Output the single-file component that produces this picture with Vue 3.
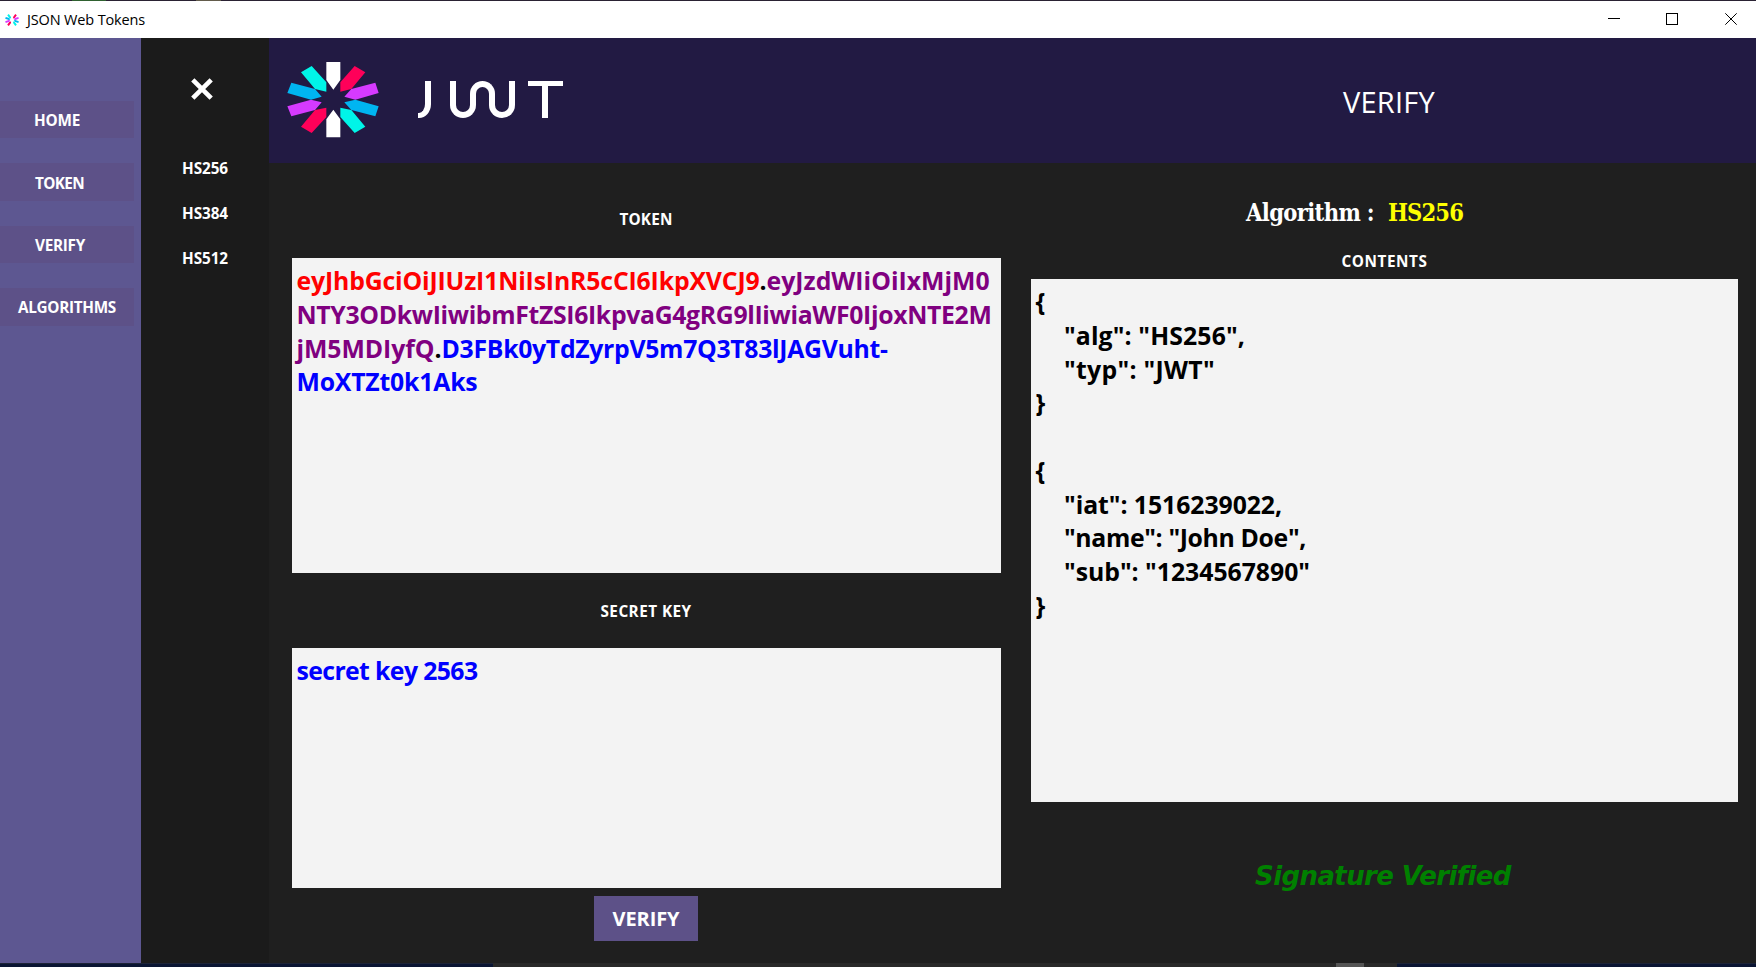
<script setup>
const nav = [
  { label: 'HOME', width: 46, inset: 34 },
  { label: 'TOKEN', width: 49, inset: 35 },
  { label: 'VERIFY', width: 50, inset: 35 },
  { label: 'ALGORITHMS', width: 98, inset: 18 },
]
const algorithms = ['HS256', 'HS384', 'HS512']
const tokenLines = [
  [
    { text: 'eyJhbGciOiJIUzI1NiIsInR5cCI6IkpXVCJ9', kind: 'head', width: 463 },
    { text: '.', kind: 'dot', width: 7 },
    { text: 'eyJzdWIiOiIxMjM0', kind: 'body', width: 223 },
  ],
  [{ text: 'NTY3ODkwIiwibmFtZSI6IkpvaG4gRG9lIiwiaWF0IjoxNTE2M', kind: 'body', width: 695 }],
  [
    { text: 'jM5MDIyfQ', kind: 'body', width: 138 },
    { text: '.', kind: 'dot', width: 7 },
    { text: 'D3FBk0yTdZyrpV5m7Q3T83lJAGVuht-', kind: 'sign', width: 446 },
  ],
  [{ text: 'MoXTZt0k1Aks', kind: 'sign', width: 181 }],
]
const contents = [
  { text: '{', width: 9 },
  { text: '"alg": "HS256",', width: 181, indent: true },
  { text: '"typ": "JWT"', width: 151, indent: true },
  { text: '}', width: 9 },
  { text: '', width: 0 },
  { text: '{', width: 9 },
  { text: '"iat": 1516239022,', width: 218, indent: true },
  { text: '"name": "John Doe",', width: 242, indent: true },
  { text: '"sub": "1234567890"', width: 246, indent: true },
  { text: '}', width: 9 },
]

// Spreads the letters of a single-line text evenly over the given width.
const vFit = {
  mounted(el, { value }) {
    const count = el.textContent.length
    if (count < 2) return
    const natural = el.getBoundingClientRect().width
    el.style.letterSpacing = `${(value - natural) / count}px`
  },
}
</script>

<template>
  <div class="screen">
    <div class="desk-top"><i class="green"></i><i class="olive"></i></div>
    <header class="titlebar">
      <svg class="app-icon" viewBox="50 60 282 238" preserveAspectRatio="none">
        <use href="#burst" />
      </svg>
      <span v-fit="118" class="app-name">JSON Web Tokens</span>
      <svg class="controls" width="130" height="12" viewBox="0 0 130 12" shape-rendering="crispEdges">
        <path d="M0 5.5h12" />
        <path d="M58.5 .5h11v11h-11z" />
        <path d="M117.3 .3l11.4 11.4M128.7 .3l-11.4 11.4" shape-rendering="auto" />
      </svg>
    </header>

    <div class="window">
      <nav class="sidebar">
        <button v-for="n in nav" :key="n.label" :style="{ paddingLeft: n.inset + 'px' }">
          <span v-fit="n.width">{{ n.label }}</span>
        </button>
      </nav>

      <aside class="drawer">
        <svg class="close" width="22" height="22" viewBox="0 0 22 22">
          <path d="M1.8 1.8l18.4 18.4M20.2 1.8L1.8 20.2" />
        </svg>
        <div v-for="a in algorithms" :key="a" class="alg"><span v-fit="46">{{ a }}</span></div>
      </aside>

      <div class="page">
        <div class="banner">
          <svg class="logo" width="94" height="79.33" viewBox="50 60 282 238">
            <g id="burst">
              <path fill="#fff" d="M171 66h42v54l-21 29-21-29zM171 292h42v-54l-21-29-21 29z" />
              <path fill="#ff0059" d="M256 78l32 19-42 50-33 8v-28zM127 279l-32-19 42-50 34-7v28z" />
              <path fill="#00f5e8" d="M127 78L95 97l42 50 34 8v-28zM256 279l32-19-42-50-33-7v28z" />
              <path fill="#d63aff" d="M318 128l10 31-70 20-33-9 21-23zM66 229l-12-30 71-20 32 8-20 23z" />
              <path fill="#00b5f1" d="M66 128l-12 31 71 20 32-9-20-23zM318 229l10-30-70-20-33 8 21 23z" />
            </g>
          </svg>
          <div class="wordmark" role="img" aria-label="JWT">
            <i class="j"></i>
            <i class="w-left"></i><i class="w-cup1"></i><i class="w-arch"></i><i class="w-cup2"></i><i class="w-right"></i>
            <i class="t-bar"></i><i class="t-stem"></i>
          </div>
          <h1><span v-fit="92">VERIFY</span></h1>
        </div>

        <main class="content">
          <section class="left">
            <h2 class="token-label"><span v-fit="53">TOKEN</span></h2>
            <div class="box token-box">
              <div v-for="(line, i) in tokenLines" :key="i" class="line">
                <span v-for="(p, j) in line" :key="j" v-fit="p.width" :class="p.kind">{{ p.text }}</span>
              </div>
            </div>
            <h2 class="key-label"><span v-fit="91">SECRET KEY</span></h2>
            <div class="box key-box">
              <div class="line"><span v-fit="181" class="sign">secret key 2563</span></div>
            </div>
            <button class="verify"><span v-fit="67">VERIFY</span></button>
          </section>

          <section class="right">
            <div class="algorithm">
              <span v-fit="128">Algorithm :</span><span v-fit="75" class="value">HS256</span>
            </div>
            <h2 class="contents-label"><span v-fit="86">CONTENTS</span></h2>
            <div class="box contents-box">
              <div v-for="(c, i) in contents" :key="i" class="line" :class="{ indent: c.indent }">
                <span v-fit="c.width">{{ c.text }}</span>
              </div>
            </div>
            <div class="status"><span v-fit="256">Signature Verified</span></div>
          </section>
        </main>
      </div>
    </div>
    <div class="desk-bottom"><i class="blue"></i><i class="bar"></i><i class="thumb"></i><i class="bar2"></i><i class="blue2"></i></div>
  </div>
</template>

<style>
body {
  margin: 0;
  overflow: hidden;
}
</style>

<style scoped>
.screen {
  width: 1756px;
  height: 967px;
  display: grid;
  grid-template-rows: 1px 37px 925px 4px;
  font-family: 'Open Sans', 'Noto Sans', sans-serif;
  background: #1f1f1f;
}
span {
  display: inline-block;
  white-space: pre;
}
h1,
h2 {
  margin: 0;
}
button {
  border: 0;
  font-family: inherit;
  color: #fff;
  box-sizing: border-box;
}
.desk-top {
  background: #2a2233;
  display: flex;
}
.green {
  margin-left: 72px;
  width: 34px;
  background: #2f6130;
}
.olive {
  margin-left: 90px;
  width: 25px;
  background: #635c4c;
}
.titlebar {
  background: #fff;
  display: flex;
  align-items: center;
}
.app-icon {
  width: 14px;
  height: 14px;
  margin: 0 8px 0 5px;
}
.app-name {
  font-size: 14.5px;
  line-height: 20px;
  color: #000;
  padding-top: 1px;
}
.controls {
  margin: 0 18px 1px auto;
  fill: none;
  stroke: #000;
  stroke-width: 1;
}
.window {
  display: grid;
  grid-template-columns: 141px 128px 1487px;
}
.sidebar {
  background: #5d5791;
  padding-top: 63px;
  display: flex;
  flex-direction: column;
  gap: 25px;
}
.sidebar button {
  width: 134px;
  height: 37.4px;
  background: #5d5188;
  padding: 1px 0 0;
  text-align: left;
  font-size: 15.3px;
  font-weight: 700;
  line-height: 20px;
}
.drawer {
  background: #1b1b1b;
  color: #fff;
}
.close {
  display: block;
  margin: 40px 0 56px 50px;
  fill: none;
  stroke: #fff;
  stroke-width: 4.6;
}
.alg {
  height: 45px;
  padding-left: 41px;
  font-size: 15.3px;
  font-weight: 700;
  line-height: 24px;
}
.page {
  display: grid;
  grid-template-rows: 125px 800px;
}
.banner {
  background: #221a43;
  display: flex;
  align-items: flex-start;
}
.logo {
  margin: 22px 0 0 17.4px;
}
.wordmark {
  position: relative;
  width: 146px;
  height: 37px;
  margin: 43px 0 0 37.6px;
}
.wordmark i {
  position: absolute;
  box-sizing: border-box;
  border: 0 solid #fff;
}
.j {
  left: 0;
  top: 0;
  width: 13px;
  height: 37px;
  border-right-width: 6.4px !important;
  border-bottom-width: 5px !important;
  border-bottom-right-radius: 12px 14px;
}
.w-left,
.w-right {
  top: 0;
  width: 6px;
  height: 21px;
  background: #fff;
}
.w-left {
  left: 32px;
}
.w-right {
  left: 91px;
}
.w-cup1,
.w-cup2 {
  top: 18px;
  height: 19px;
  width: 26px;
  border-width: 0 6px 6px !important;
  border-radius: 0 0 13px 13px;
}
.w-cup1 {
  left: 32px;
}
.w-arch {
  left: 52px;
  top: 0;
  height: 19px;
  width: 25px;
  border-width: 6px 6px 0 !important;
  border-radius: 13px 13px 0 0;
}
.w-cup2 {
  left: 71px;
}
.t-bar {
  left: 110px;
  top: 0;
  width: 35px;
  height: 5px;
  background: #fff;
}
.t-stem {
  left: 124px;
  top: 0;
  width: 6.5px;
  height: 37px;
  background: #fff;
}
h1 {
  margin: 42px 0 0 779px;
  color: #fff;
  font-size: 29px;
  font-weight: 400;
  line-height: 44px;
}
.content {
  background: #1f1f1f;
  display: grid;
  grid-template-columns: 709px 707px;
  column-gap: 30px;
  padding-left: 23px;
}
.left,
.right {
  display: flex;
  flex-direction: column;
  align-items: center;
}
h2 {
  color: #fff;
  font-size: 15.3px;
  font-weight: 700;
  line-height: 20px;
}
.token-label {
  margin: 46px 1px 29px 0;
}
.box {
  width: 100%;
  box-sizing: border-box;
  background: #f3f3f3;
  padding: 6px 0 0 4.5px;
  font-size: 24.8px;
  font-weight: 700;
}
.line {
  height: 33.75px;
  line-height: 33.75px;
  white-space: nowrap;
  display: flex;
}
.indent {
  padding-left: 28.5px;
}
.token-box {
  height: 315px;
}
.key-label {
  margin: 28px 1px 27px 0;
}
.key-box {
  height: 240px;
}
.head {
  color: #f00;
}
.body {
  color: #800080;
}
.sign {
  color: #00f;
}
.dot {
  color: #000;
}
.verify {
  width: 104px;
  height: 45px;
  margin: 8px 1px 0 0;
  padding: 0;
  background: #5d5188;
  font-size: 20px;
  font-weight: 700;
}
.algorithm {
  margin: 35px 0 0 -60px;
  height: 53px;
  display: flex;
  gap: 14px;
  color: #fff;
  font: 700 23.5px/30px 'DejaVu Serif Condensed', 'DejaVu Serif', serif;
}
.value {
  color: #ff0;
}
.contents-label {
  margin-bottom: 8px;
}
.contents-box {
  height: 523px;
  color: #000;
}
.status {
  margin: 54px 3px 0 0;
  color: #008000;
  font: italic 700 26px/40px 'DejaVu Sans', sans-serif;
}
.desk-bottom {
  display: grid;
  grid-template-columns: 493px 843px 28px 33px 359px;
}
.blue,
.blue2 {
  background: #0a1533;
  border-top: 1px solid #1d2438;
}
.bar,
.bar2 {
  background: #292929;
}
.thumb {
  background: #555;
}
</style>
